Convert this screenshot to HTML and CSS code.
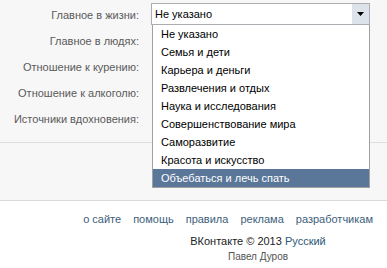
FILE: index.html
```html
<!DOCTYPE html>
<html lang="ru">
<head>
    <meta charset="UTF-8">
    <title>Редактирование страницы</title>
    <link rel="stylesheet" href="styles.css">
</head>
<body>

<div class="page">
    <div class="section">
        <div class="row">
            <div class="label">Главное в жизни:</div>
            <div class="field">
                <div class="select">
                    <span>Не указано</span>
                    <span class="arrow"><svg width="7" height="4" viewBox="0 0 7 4"><path d="M0 0h7L3.5 4z" fill="#000"/></svg></span>
                </div>
                <!-- open dropdown list -->
                <ul class="options">
                    <li>Не указано</li>
                    <li>Семья и дети</li>
                    <li>Карьера и деньги</li>
                    <li>Развлечения и отдых</li>
                    <li>Наука и исследования</li>
                    <li>Совершенствование мира</li>
                    <li>Саморазвитие</li>
                    <li>Красота и искусство</li>
                    <li class="active">Объебаться и лечь спать</li>
                </ul>
            </div>
        </div>
        <div class="row"><div class="label">Главное в людях:</div></div>
        <div class="row"><div class="label">Отношение к курению:</div></div>
        <div class="row"><div class="label">Отношение к алкоголю:</div></div>
        <div class="row"><div class="label">Источники вдохновения:</div></div>
    </div>
</div>

<footer>
    <div class="links">
        <a href="#">о сайте</a>
        <a href="#">помощь</a>
        <a href="#">правила</a>
        <a href="#">реклама</a>
        <a href="#">разработчикам</a>
    </div>
    <div class="info">
        <p>ВКонтакте &copy; 2013 <a href="#">Русский</a></p>
        <p class="author">Павел Дуров</p>
    </div>
</footer>

</body>
</html>
```

FILE: styles.css
```css
/* Reset */
body, p, ul, li {
    margin: 0;
    padding: 0;
}

body {
    font-family: "Liberation Sans", Arial, sans-serif;
    font-size: 11px;
    color: #000;
    background: #fff;
}

.page {
    height: 201px;
    background: #f7f7f7;
    border-bottom: 1px solid #d9d9d9;
    box-sizing: border-box;
}

.section {
    padding-top: 4px;
    height: 143px;
    box-sizing: border-box;
    border-bottom: 1px solid #dedede;
}

.row {
    display: flex;
    height: 26px;
}

.label {
    width: 139px;
    text-align: right;
    color: #5a5a5a;
    line-height: 22px;
    white-space: nowrap;
}

.field {
    position: relative;
    margin-left: 12px;
    margin-top: -1px;
}

.select {
    width: 219px;
    height: 22px;
    box-sizing: border-box;
    border: 1px solid #abadb3;
    background: #fff;
    display: flex;
    align-items: center;
    justify-content: space-between;
    padding-left: 3px;
}

.arrow {
    width: 17px;
    height: 20px;
    background: #dde3ea;
    display: flex;
    align-items: center;
    justify-content: center;
}

/* Dropdown list */
.options {
    position: absolute;
    top: 22px;
    left: 1px;
    width: 218px;
    list-style: none;
    background: #fff;
    border: 1px solid #a0a0a0;
    border-top: none;
    box-sizing: border-box;
    z-index: 10;
}

.options li {
    height: 18px;
    line-height: 18px;
    padding-left: 8px;
}

.options li.active {
    background: #5a7698;
    color: #fff;
}

/* Footer */
footer {
    padding-top: 11px;
}

.links {
    display: flex;
    justify-content: flex-end;
    gap: 12px;
    padding-right: 14px;
    line-height: 14px;
}

footer a {
    color: #2b587a;
    text-decoration: none;
}

.links a {
    color: #3c5e7c;
}

.info {
    margin-left: 129px;
    text-align: center;
    margin-top: 7px;
    color: #222;
}

.info p {
    line-height: 17px;
}

.info .author {
    font-size: 10px;
    line-height: 14px;
    color: #555;
}
```
